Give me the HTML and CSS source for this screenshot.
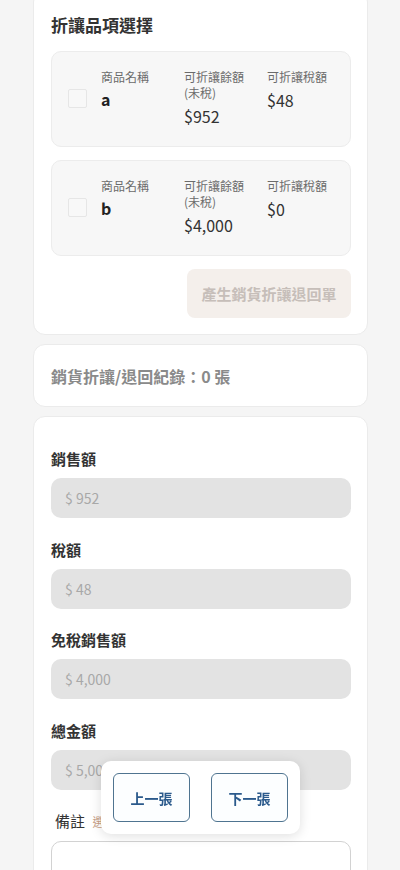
FILE: index.html
```html
<!DOCTYPE html>
<html lang="zh-Hant">
<head>
<meta charset="utf-8">
<meta name="viewport" content="width=device-width, initial-scale=1">
<title>折讓</title>
<link rel="stylesheet" href="styles.css">
</head>
<body>
<div class="page">
  <section class="card card-items">
    <h2 class="title">折讓品項選擇</h2>
    <div class="item">
      <span class="check"></span>
      <div class="cols">
        <div class="col"><div class="lbl">商品名稱</div><div class="name">a</div></div>
        <div class="col"><div class="lbl">可折讓餘額<br>(未稅)</div><div class="val">$952</div></div>
        <div class="col"><div class="lbl">可折讓稅額</div><div class="val">$48</div></div>
      </div>
    </div>
    <div class="item">
      <span class="check"></span>
      <div class="cols">
        <div class="col"><div class="lbl">商品名稱</div><div class="name">b</div></div>
        <div class="col"><div class="lbl">可折讓餘額<br>(未稅)</div><div class="val">$4,000</div></div>
        <div class="col"><div class="lbl">可折讓稅額</div><div class="val">$0</div></div>
      </div>
    </div>
    <div class="actions">
      <button class="gen-btn" disabled>產生銷貨折讓退回單</button>
    </div>
  </section>

  <section class="card card-record">
    <div class="record">銷貨折讓/退回紀錄：0 張</div>
  </section>

  <section class="card card-form">
    <div class="field">
      <label class="flabel">銷售額</label>
      <div class="input">$ 952</div>
    </div>
    <div class="field">
      <label class="flabel">稅額</label>
      <div class="input">$ 48</div>
    </div>
    <div class="field">
      <label class="flabel">免稅銷售額</label>
      <div class="input">$ 4,000</div>
    </div>
    <div class="field">
      <label class="flabel">總金額</label>
      <div class="input">$ 5,000</div>
    </div>
    <div class="field">
      <label class="flabel note">備註 <span class="opt">選填</span></label>
      <div class="textarea"></div>
    </div>
  </section>
</div>

<div class="pager">
  <button class="pg-btn">上一張</button>
  <button class="pg-btn">下一張</button>
</div>
</body>
</html>
```

FILE: styles.css
```css
* { box-sizing: border-box; }
html, body { margin: 0; padding: 0; }
body {
  background: #f5f5f5;
  font-family: "Noto Sans CJK TC", "Noto Sans", sans-serif;
  color: #333;
}
.page {
  padding: 0 32px 0 33px;
  margin-top: -10px;
}
.card {
  background: #fff;
  border: 1px solid #ebebeb;
  border-radius: 12px;
  margin-bottom: 9px;
}
.card-items {
  padding: 22px 16px 16px 17px;
}
.title {
  margin: 0;
  font-size: 17px;
  line-height: 24px;
  font-weight: 700;
  color: #333;
}
.item {
  margin-top: 13px;
  background: #f7f7f7;
  border: 1px solid #ececec;
  border-radius: 10px;
  padding: 17px 0 19px 16px;
  display: flex;
  align-items: center;
  gap: 14px;
}
.title + .item { margin-top: 14px; }
.check {
  width: 19px;
  height: 19px;
  border: 1px solid #e6e6e6;
  border-radius: 2px;
  background: #f8f8f8;
  flex: none;
}
.cols {
  display: grid;
  grid-template-columns: 83px 83px 83px;
  align-self: flex-start;
}
.lbl {
  font-size: 12px;
  line-height: 16px;
  color: #6b6b6b;
}
.name {
  margin-top: 3px;
  font-size: 16px;
  line-height: 22px;
  font-weight: 700;
  color: #222;
}
.val {
  margin-top: 4px;
  font-size: 16px;
  line-height: 22px;
  color: #333;
}
.actions {
  display: flex;
  justify-content: flex-end;
  margin-top: 13px;
}
.gen-btn {
  width: 164px;
  height: 49px;
  border: none;
  border-radius: 8px;
  background: #f4efeb;
  color: #c6beb9;
  font-family: inherit;
  font-size: 15px;
  font-weight: 700;
}
.card-record {
  padding: 19px 16px 18px 17px;
}
.record {
  font-size: 16px;
  line-height: 24px;
  font-weight: 700;
  color: #8a8a8a;
}
.card-form {
  padding: 31px 16px 40px 17px;
}
.field + .field { margin-top: 20.5px; }
.flabel {
  display: block;
  font-size: 15px;
  line-height: 22px;
  font-weight: 700;
  color: #333;
}
.flabel.note {
  padding-left: 4px;
  font-weight: 400;
  color: #333;
}
.opt {
  font-size: 12px;
  color: #c79e86;
  margin-left: 4px;
}
.input {
  margin-top: 8px;
  height: 40px;
  border-radius: 10px;
  background: #e3e3e3;
  padding-left: 14px;
  font-size: 14px;
  line-height: 40px;
  color: #a8a8a8;
}
.textarea {
  margin-top: 8px;
  height: 90px;
  border: 1px solid #d2d2d2;
  border-radius: 10px;
  background: #fff;
}
.pager {
  position: fixed;
  left: 101px;
  top: 761px;
  width: 199px;
  height: 73px;
  background: #fff;
  border-radius: 10px;
  box-shadow: 0 2px 12px rgba(0, 0, 0, 0.13);
  padding: 12px;
  display: flex;
  gap: 21px;
}
.pg-btn {
  width: 77px;
  height: 49px;
  border: 1px solid #4f7490;
  border-radius: 6px;
  background: #fcfeff;
  color: #2b5a8c;
  font-family: inherit;
  font-size: 14px;
  font-weight: 700;
  padding: 0;
}
```
